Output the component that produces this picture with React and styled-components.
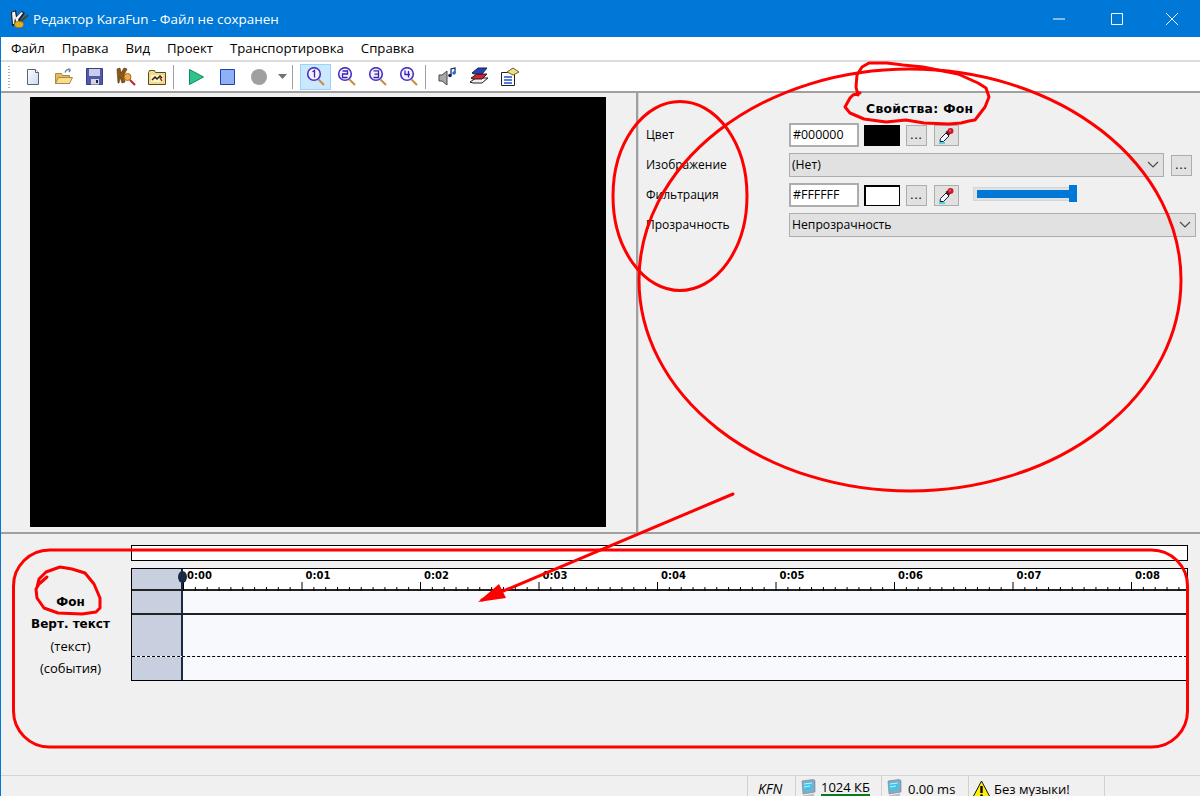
import React from "react";
import styled, { createGlobalStyle } from "styled-components";

const colors = {
    blue: "#0078D7",
    panel: "#F0F0F0",
    line: "#A0A0A0",
    field: "#E1E1E1",
    fieldBorder: "#ADADAD",
    navy: "#1B2A44",
    head: "#C8D0E0",
};

const GlobalStyle = createGlobalStyle`
    html, body {
        margin: 0;
        padding: 0;
        background: ${colors.panel};
    }
    * { box-sizing: border-box; }
`;

const Window = styled.div`
    position: relative;
    width: 1200px;
    height: 796px;
    overflow: hidden;
    display: flex;
    flex-direction: column;
    background: ${colors.panel};
    border-left: 1px solid ${colors.blue};
    font-family: "Open Sans", "Noto Sans", sans-serif;
    font-size: 12px;
    color: #000;
`;

const TitleBar = styled.div`
    flex: 0 0 37px;
    margin-left: -1px;
    background: ${colors.blue};
    display: flex;
    align-items: center;
    padding-left: 10px;
    color: #fff;
`;

const TitleText = styled.span`
    margin-left: 4px;
    font-size: 13.4px;
    flex: 1;
    padding-top: 1px;
`;

const WinButton = styled.div`
    width: 57.5px;
    height: 36px;
    display: flex;
    align-items: center;
    justify-content: center;
    position: relative;
    left: ${(p) => p.$nudge || 0}px;
`;

const MenuBar = styled.div`
    flex: 0 0 23px;
    background: #fff;
    display: flex;
    align-items: center;
    padding: 0 0 2px 1.5px;
`;

const MenuItem = styled.span`
    padding: 0 8.5px;
    font-size: 13.2px;
`;

const ToolBar = styled.div`
    flex: 0 0 33px;
    background: #fff;
    border-top: 2px solid #DCDCDC;
    border-bottom: 2px solid ${colors.line};
    display: flex;
    align-items: center;
`;

const Grip = styled.div`
    width: 2px;
    height: 22px;
    margin: 0 7px 0 7px;
    background: repeating-linear-gradient(to bottom, #B0B0B0 0 1px, transparent 1px 3px);
`;

const ToolButton = styled.div`
    flex: 0 0 ${(p) => p.$w || 31}px;
    height: 26px;
    display: flex;
    align-items: center;
    justify-content: center;
    background: ${(p) => (p.$active ? "#CCE8FF" : "transparent")};
    border: 1px solid ${(p) => (p.$active ? "#99D1FF" : "transparent")};
`;

const ToolSep = styled.div`
    flex: 0 0 1px;
    height: 24px;
    background: ${colors.line};
    margin: 0 ${(p) => p.$right}px 0 ${(p) => p.$left}px;
`;

const Main = styled.div`
    flex: 0 0 439px;
    display: flex;
`;

const PreviewPane = styled.div`
    flex: 0 0 635px;
    padding: 4px 30px 5px 29px;
`;

const Preview = styled.div`
    width: 100%;
    height: 100%;
    background: #000;
`;

const VSplit = styled.div`
    flex: 0 0 3px;
    background: ${colors.line};
    border-right: 1px solid #D8D8D8;
`;

const PropsPane = styled.div`
    flex: 1;
    min-width: 0;
    padding: 7px 0 0 7px;
    display: flex;
    flex-direction: column;
`;

const PropsTitle = styled.div`
    height: 23px;
    padding-left: 220px;
    font-family: "DejaVu Sans", sans-serif;
    font-weight: bold;
    font-size: 12.4px;
    letter-spacing: 0.3px;
    line-height: 18px;
    white-space: nowrap;
`;

const PropsGrid = styled.div`
    display: grid;
    grid-template-columns: 143px 1fr;
    grid-auto-rows: 24px;
    row-gap: 6px;
    align-items: center;
`;

const PropLabel = styled.span`
    font-size: 12px;
    padding-bottom: 2px;
`;

const PropRow = styled.div`
    display: flex;
    align-items: center;
    height: 24px;
`;

const HexInput = styled.div`
    width: 70px;
    height: 24px;
    background: #fff;
    border: 2px solid ${colors.fieldBorder};
    padding-left: 2px;
    font-size: 12.4px;
    line-height: 19px;
`;

const Swatch = styled.div`
    width: 36px;
    height: 21px;
    margin-left: 5px;
    background: ${(p) => p.$color};
    border: 1px solid #000;
    border-top-width: 2px;
    border-left-width: 2px;
`;

const SmallButton = styled.div`
    width: ${(p) => p.$w || 21}px;
    height: 21px;
    margin-left: ${(p) => p.$gap || 6}px;
    background: ${colors.field};
    border: 1px solid ${colors.fieldBorder};
    display: flex;
    align-items: center;
    justify-content: center;
    font-size: 12px;
    line-height: 14px;
    letter-spacing: 1px;
    flex: none;
`;

const Select = styled.div`
    flex: 0 0 ${(p) => p.$width}px;
    height: 24px;
    background: ${colors.field};
    border: 1px solid ${colors.fieldBorder};
    display: flex;
    align-items: center;
    justify-content: space-between;
    padding: 0 4px 2px 2px;
    font-size: 12.2px;
`;

const Slider = styled.div`
    position: relative;
    width: 100px;
    height: 14px;
    margin: 0 0 2px 14px;
    background: ${colors.field};
    border: 1px solid #D4D4D4;
    padding: 2px 3px;
`;

const SliderFill = styled.div`
    height: 8px;
    width: 100%;
    background: ${colors.blue};
`;

const SliderThumb = styled.div`
    position: absolute;
    top: -3px;
    right: -5px;
    width: 8px;
    height: 17px;
    background: ${colors.blue};
`;

const HSplit = styled.div`
    flex: 0 0 2px;
    background: ${colors.line};
    margin-left: -1px;
`;

const Timeline = styled.div`
    flex: 0 0 241px;
    display: grid;
    grid-template-columns: 130px 1057px;
    grid-template-rows: 16px auto;
    row-gap: 7px;
    padding-top: 11px;
    align-content: start;
`;

const TopBox = styled.div`
    grid-column: 2;
    background: #fff;
    border: 1px solid #000;
`;

const TrackLabels = styled.div`
    grid-column: 1;
    padding: 23px 0 0 9px;
    display: flex;
    flex-direction: column;
    align-items: center;
`;

const TrackLabel = styled.div`
    height: 22px;
    line-height: 22px;
    font-family: ${(p) => (p.$bold ? '"DejaVu Sans", sans-serif' : "inherit")};
    font-weight: ${(p) => (p.$bold ? "bold" : "normal")};
    font-size: ${(p) => (p.$bold ? 12 : 13)}px;
`;

const Tracks = styled.div`
    grid-column: 2;
    position: relative;
    border: 1px solid #000;
    height: 113px;
`;

const Lane = styled.div`
    display: flex;
    height: ${(p) => p.$h}px;
    border-bottom: ${(p) => p.$border || "none"};
    background: #F8F9FC;
`;

const LaneHead = styled.div`
    flex: 0 0 49px;
    background: ${colors.head};
`;

const LaneBody = styled.div`
    flex: 1;
    min-width: 0;
    border-left: 2px solid ${colors.navy};
    background: #F8F9FC;
`;

const RulerBody = styled(LaneBody)`
    display: flex;
    flex-direction: column;
    background: #fff;
`;

const Seconds = styled.div`
    display: flex;
    flex: 0 0 11px;
    padding-left: 4px;
`;

const Second = styled.span`
    flex: 0 0 118.5px;
    font-family: "DejaVu Sans", sans-serif;
    font-weight: bold;
    font-size: 10px;
    line-height: 13px;
`;

const TickStrip = styled.svg`
    flex: none;
    display: block;
`;

const Playhead = styled.div`
    position: absolute;
    left: 46px;
    top: 2px;
    width: 9px;
    height: 12px;
    border-radius: 50%;
    background: ${colors.navy};
`;

const StatusBar = styled.div`
    flex: 0 0 21px;
    border-top: 1px solid #D4D4D4;
    display: flex;
    justify-content: flex-end;
    padding-right: 95px;
    line-height: 14px;
`;

const StatusCell = styled.div`
    flex: 0 0 ${(p) => p.$w}px;
    height: 20px;
    border-left: 1px solid #D0D0D0;
    display: flex;
    align-items: center;
    padding: 6px 0 0 ${(p) => p.$pad || 0}px;
    font-size: 13px;
    gap: ${(p) => p.$gap || 0}px;
    &:last-of-type { border-right: 1px solid #D0D0D0; }
`;

const Kfn = styled.i`
    font-size: 14px;
`;

const MemText = styled.span`
    align-self: flex-start;
    margin-top: -4px;
    height: 18px;
    line-height: 18px;
    border-bottom: 2px solid #0A7A1E;
`;

const Annotations = styled.svg`
    position: absolute;
    left: -1px;
    top: 0;
    width: 1200px;
    height: 796px;
    pointer-events: none;
`;

function Logo() {
    return (
        <svg width="19" height="20" viewBox="0 0 19 20">
            <path d="M1 3l5-2 1 6 5-5 3 2-5 7 1 3-4 3-2-6-1 6-2 0z" fill="#1E1E1E" />
            <path d="M2 3.500l3-1 1 6 5.500-5.500 1.500 1-5 6.500 1 3-2 1.500-2-6-1 6H3z" fill="#F2F2F2" />
            <path d="M18 6l-8 7" stroke="#5A4210" strokeWidth="2" />
            <ellipse cx="9" cy="15.500" rx="4.500" ry="3.200" fill="#E0B020" stroke="#8A6A10" strokeWidth=".6" />
        </svg>
    );
}

function PageIcon() {
    return (
        <svg width="16" height="18" viewBox="0 0 16 18">
            <defs>
                <linearGradient id="pageFill" x1="0" y1="0" x2="1" y2="1">
                    <stop offset="0" stopColor="#FFFFFF" />
                    <stop offset="1" stopColor="#C8D8F0" />
                </linearGradient>
            </defs>
            <path d="M2.500 1.500h8l3 3v12h-11z" fill="url(#pageFill)" stroke="#5A6478" />
            <path d="M10.500 1.500v3h3" fill="#fff" stroke="#5A6478" />
        </svg>
    );
}

function OpenIcon() {
    return (
        <svg width="20" height="18" viewBox="0 0 20 18">
            <path d="M1.500 5.500h6l1 2h7v8h-14z" fill="#E8B95A" stroke="#A88A48" />
            <path d="M1.500 15.500l3-6h14l-3 6z" fill="#FBDD8E" stroke="#A88A48" />
            <path d="M11 4.500c1-2.500 3-3.500 5.500-2.500M16.500 2L14.500.5M16.500 2l-1.500 2" fill="none" stroke="#6E86A8" strokeWidth="1.400" />
        </svg>
    );
}

function SaveIcon() {
    return (
        <svg width="17" height="17" viewBox="0 0 17 17">
            <path d="M.5.5h16v16H.5z" fill="#5159A8" stroke="#3A4088" />
            <path d="M3 1h11v7H3z" fill="#C9CEEC" />
            <path d="M5 11h8v5.500H5z" fill="#D4D6E0" />
            <path d="M10 12h2v3h-2z" fill="#22264C" />
        </svg>
    );
}

function FindIcon() {
    return (
        <svg width="20" height="20" viewBox="0 0 20 20">
            <path d="M1 2l3-1 1 5 3-5 3 1-3 6 1 7-3 1-2-6-1 6H2z" fill="#8A5A14" stroke="#4A2C08" strokeWidth=".6" />
            <circle cx="11.500" cy="10" r="3.500" fill="#F2A94A" stroke="#A86A1A" />
            <path d="M14 13l5 5" stroke="#C0202A" strokeWidth="2" />
        </svg>
    );
}

function FolderIcon() {
    return (
        <svg width="18" height="16" viewBox="0 0 18 16">
            <path d="M.5 3.500l1-2h5l1 2h10v12H.5z" fill="#F0DC8C" stroke="#5A4A18" />
            <path d="M3 6h12v7H3z" fill="#FFF4C0" />
            <path d="M4 11l3-3 2 2 3-3 2 2" fill="none" stroke="#222" strokeWidth="1.500" />
            <path d="M12 9l2 3" stroke="#C02020" strokeWidth="1.400" />
        </svg>
    );
}

function PlayIcon() {
    return (
        <svg width="17" height="18" viewBox="0 0 17 18">
            <path d="M1.500 1.500v15l14-7.500z" fill="#2CC48A" stroke="#0F8A5A" />
        </svg>
    );
}

function StopIcon() {
    return (
        <svg width="15" height="16" viewBox="0 0 15 16">
            <path d="M.5.500h14v15H.5z" fill="#8FB0F2" stroke="#1F3FC0" />
        </svg>
    );
}

function RecordIcon() {
    return (
        <svg width="16" height="16" viewBox="0 0 16 16">
            <circle cx="8" cy="8" r="8" fill="#A0A0A0" />
        </svg>
    );
}

function CaretIcon() {
    return (
        <svg width="9" height="5" viewBox="0 0 9 5">
            <path d="M0 0h9L4.500 5z" fill="#707070" />
        </svg>
    );
}

function ZoomIcon({ n }) {
    const digits = {
        1: "M6.500 4.800L8.500 3.500v7",
        2: "M5.500 4h5v3h-5v3.500h5",
        3: "M5.500 3.800h5v6.700h-5M6.500 7.100h4",
        4: "M6 3.500V7.500h5M9.500 4v6.500",
    };
    return (
        <svg width="20" height="20" viewBox="0 0 20 20">
            <path d="M12.500 12.500l5.500 5.500" stroke="#C09040" strokeWidth="2" />
            <circle cx="8" cy="7" r="6.300" fill="#F2F2FF" stroke="#4A30C0" strokeWidth="1.600" />
            <path d={digits[n]} fill="none" stroke="#3A22B0" strokeWidth="1.300" />
        </svg>
    );
}

function SpeakerIcon() {
    return (
        <svg width="20" height="20" viewBox="0 0 20 20">
            <path d="M1 8h3l5-4v14l-5-4H1z" fill="#A8A8A8" stroke="#4A4A4A" />
            <path d="M13 8V2l4-1v5" fill="none" stroke="#10205A" strokeWidth="1.200" />
            <circle cx="12" cy="8.500" r="1.800" fill="#10205A" />
            <circle cx="16" cy="6" r="1.800" fill="#1878C8" />
        </svg>
    );
}

function BooksIcon() {
    return (
        <svg width="20" height="20" viewBox="0 0 20 20">
            <path d="M1 15l6-4h12l-6 5H4z" fill="#F0F0F0" stroke="#222" />
            <path d="M2 11l6-4h10l-5 5H4z" fill="#D82030" stroke="#222" />
            <path d="M3 6l6-5h9l-5 6H5z" fill="#2040C8" stroke="#222" />
        </svg>
    );
}

function PropsIcon() {
    return (
        <svg width="20" height="20" viewBox="0 0 20 20">
            <path d="M1.500 5.500h13v13h-13z" fill="#fff" stroke="#222" />
            <path d="M4 10h8M4 13h8M4 16h8" stroke="#2050D0" strokeWidth="1.400" />
            <path d="M7 5l6-4 6 4-6 3z" fill="#EFE088" stroke="#6A6020" />
        </svg>
    );
}

function Dropper() {
    return (
        <svg width="17" height="17" viewBox="0 0 17 17">
            <path d="M1 16h6" stroke="#20D0E0" strokeWidth="1.500" />
            <path d="M2 14.500l.5-3L8 6l3 3-5.500 5.500z" fill="#F4F8FA" stroke="#14202C" />
            <path d="M7.500 5l2-1.500L12.500 6.500 11 8.500z" fill="#3A1010" />
            <circle cx="12.500" cy="4" r="3" fill="#D01828" />
            <circle cx="12" cy="3.500" r=".9" fill="#F07080" />
        </svg>
    );
}

function Chevron() {
    return (
        <svg width="12" height="7" viewBox="0 0 12 7">
            <path d="M1 1l5 5 5-5" fill="none" stroke="#4A4A4A" strokeWidth="1.200" />
        </svg>
    );
}

function Monitor() {
    return (
        <svg width="15" height="20" viewBox="0 0 15 20">
            <path d="M1 2l11-1.500 2 1V13L2 15z" fill="#8FA8C0" stroke="#6A8298" strokeWidth=".6" />
            <path d="M2.500 3.500l9-1v8l-9 1.500z" fill="#40C4E8" />
            <path d="M3 5l8-1M3 8l6-1" stroke="#C8F0FA" strokeWidth="1" />
            <path d="M2 16.500l11-2V17L2 19.500z" fill="#B8C4CC" />
        </svg>
    );
}

function Warning() {
    return (
        <svg width="19" height="19" viewBox="0 0 19 19">
            <path d="M9.500 1L18.500 18H.5z" fill="#FFF000" stroke="#111" />
            <path d="M9.500 6v7" stroke="#000" strokeWidth="2.400" />
            <circle cx="9.500" cy="15.500" r="1.300" fill="#000" />
        </svg>
    );
}

function RulerTicks() {
    const ticks = [];
    for (let i = 0; i < 85; i++) {
        const x = i * 11.85 + 0.5;
        ticks.push(<line key={i} x1={x} x2={x} y1={i % 10 === 0 ? 0 : 5} y2={9} stroke="#000" />);
    }
    return (
        <TickStrip width="1004" height="9" viewBox="0 0 1004 9">
            {ticks}
        </TickStrip>
    );
}

function Scribbles() {
    return (
        <Annotations viewBox="0 0 1200 796">
            <g fill="none" stroke="#FF0000" strokeWidth="3" strokeLinecap="round" strokeLinejoin="round">
                <ellipse cx="910" cy="280" rx="271" ry="211" />
                <ellipse cx="680" cy="196" rx="67" ry="94.500" />
                <path d="M860 93l-7 2-3 3-5 9 5 6 14 6 22 3 20-2 18 3 25 1 12-1 8-2 6-1 10-13 4-10-3-9-8-5-20-9-20-4-15-3-20-2-16-2-18 0-7 4-5 8-1 12 2 8" />
                <path d="M37 587l2-8 7-7 14-5 12 2 13 4 9 11 6 14 0 10-4 4-14 2-24-1-14-5-7-10-1-9 3-5 8-7" />
                <rect x="13.500" y="550" width="1174" height="197" rx="36" ry="36" />
                <path d="M733 494L482 600" />
            </g>
            <path d="M478 602l21-18 7 14z" fill="#FF0000" />
        </Annotations>
    );
}

function App() {
    return (
        <Window>
            <GlobalStyle />
            <TitleBar>
                <Logo />
                <TitleText>Редактор KaraFun - Файл не сохранен</TitleText>
                <WinButton $nudge={3}>
                    <svg width="12" height="2" viewBox="0 0 12 2"><path d="M0 1h12" stroke="#fff" /></svg>
                </WinButton>
                <WinButton $nudge={3}>
                    <svg width="12" height="12" viewBox="0 0 12 12"><path d="M.5.500h11v11H.5z" fill="none" stroke="#fff" /></svg>
                </WinButton>
                <WinButton $nudge={1}>
                    <svg width="12" height="12" viewBox="0 0 12 12"><path d="M0 0l12 12M12 0L0 12" stroke="#fff" /></svg>
                </WinButton>
            </TitleBar>

            <MenuBar>
                {["Файл", "Правка", "Вид", "Проект", "Транспортировка", "Справка"].map((item) => (
                    <MenuItem key={item}>{item}</MenuItem>
                ))}
            </MenuBar>

            <ToolBar>
                <Grip />
                <ToolButton><PageIcon /></ToolButton>
                <ToolButton><OpenIcon /></ToolButton>
                <ToolButton><SaveIcon /></ToolButton>
                <ToolButton><FindIcon /></ToolButton>
                <ToolButton><FolderIcon /></ToolButton>
                <ToolSep $left={1} $right={7} />
                <ToolButton><PlayIcon /></ToolButton>
                <ToolButton><StopIcon /></ToolButton>
                <ToolButton><RecordIcon /></ToolButton>
                <ToolButton $w={16}><CaretIcon /></ToolButton>
                <ToolSep $left={2} $right={7} />
                <ToolButton $active><ZoomIcon n={1} /></ToolButton>
                <ToolButton><ZoomIcon n={2} /></ToolButton>
                <ToolButton><ZoomIcon n={3} /></ToolButton>
                <ToolButton><ZoomIcon n={4} /></ToolButton>
                <ToolSep $left={1} $right={6} />
                <ToolButton><SpeakerIcon /></ToolButton>
                <ToolButton><BooksIcon /></ToolButton>
                <ToolButton><PropsIcon /></ToolButton>
            </ToolBar>

            <Main>
                <PreviewPane>
                    <Preview />
                </PreviewPane>
                <VSplit />
                <PropsPane>
                    <PropsTitle>Свойства: Фон</PropsTitle>
                    <PropsGrid>
                        <PropLabel>Цвет</PropLabel>
                        <PropRow>
                            <HexInput>#000000</HexInput>
                            <Swatch $color="#000" />
                            <SmallButton>...</SmallButton>
                            <SmallButton $w={25} $gap={7}><Dropper /></SmallButton>
                        </PropRow>

                        <PropLabel>Изображение</PropLabel>
                        <PropRow>
                            <Select $width={375}>(Нет)<Chevron /></Select>
                            <SmallButton $gap={7}>...</SmallButton>
                        </PropRow>

                        <PropLabel>Фильтрация</PropLabel>
                        <PropRow>
                            <HexInput>#FFFFFF</HexInput>
                            <Swatch $color="#fff" />
                            <SmallButton>...</SmallButton>
                            <SmallButton $w={25} $gap={7}><Dropper /></SmallButton>
                            <Slider>
                                <SliderFill />
                                <SliderThumb />
                            </Slider>
                        </PropRow>

                        <PropLabel>Прозрачность</PropLabel>
                        <PropRow>
                            <Select $width={407}>Непрозрачность<Chevron /></Select>
                        </PropRow>
                    </PropsGrid>
                </PropsPane>
            </Main>

            <HSplit />

            <Timeline>
                <TopBox />
                <TrackLabels>
                    <TrackLabel $bold>Фон</TrackLabel>
                    <TrackLabel $bold>Верт. текст</TrackLabel>
                    <TrackLabel>(текст)</TrackLabel>
                    <TrackLabel>(события)</TrackLabel>
                </TrackLabels>
                <Tracks>
                    <Lane $h={22} $border="2px solid #222">
                        <LaneHead />
                        <RulerBody>
                            <Seconds>
                                {["0:00", "0:01", "0:02", "0:03", "0:04", "0:05", "0:06", "0:07", "0:08"].map((t) => (
                                    <Second key={t}>{t}</Second>
                                ))}
                            </Seconds>
                            <RulerTicks />
                        </RulerBody>
                    </Lane>
                    <Lane $h={24} $border="2px solid #222">
                        <LaneHead />
                        <LaneBody />
                    </Lane>
                    <Lane $h={42} $border="1px dashed #000">
                        <LaneHead />
                        <LaneBody />
                    </Lane>
                    <Lane $h={23}>
                        <LaneHead />
                        <LaneBody />
                    </Lane>
                    <Playhead />
                </Tracks>
            </Timeline>

            <StatusBar>
                <StatusCell $w={48} $pad={10}><Kfn>KFN</Kfn></StatusCell>
                <StatusCell $w={86} $pad={5} $gap={5}><Monitor /><MemText>1024 КБ</MemText></StatusCell>
                <StatusCell $w={87} $pad={5} $gap={6}><Monitor /><span>0.00 ms</span></StatusCell>
                <StatusCell $w={137} $pad={3} $gap={3}><Warning /><span>Без музыки!</span></StatusCell>
            </StatusBar>

            <Scribbles />
        </Window>
    );
}

export default App;
